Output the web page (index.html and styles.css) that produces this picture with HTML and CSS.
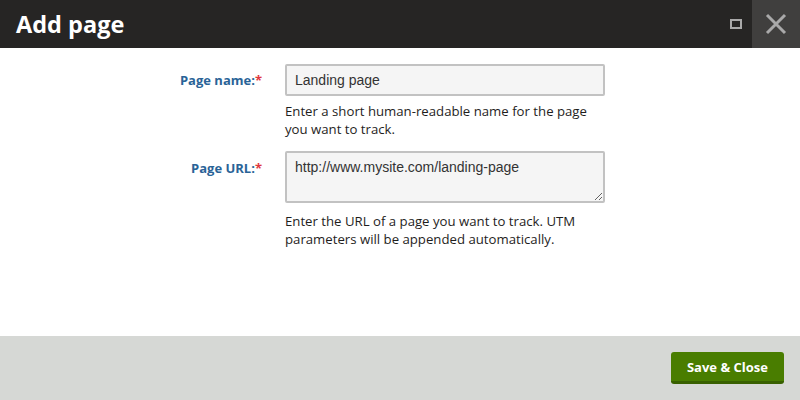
FILE: index.html
```html
<!DOCTYPE html>
<html>
<head>
<meta charset="utf-8">
<link rel="stylesheet" href="styles.css">
</head>
<body>
<div class="dialog">
  <header class="header">
    <h1 class="title">Add page</h1>
    <div class="header-actions">
      <button class="btn-max" aria-label="Maximize"><span class="max-icon"></span></button>
      <button class="btn-close" aria-label="Close">
        <svg width="22" height="22" viewBox="0 0 22 22"><path d="M2 2 L20 20 M20 2 L2 20" stroke="#a9a9a9" stroke-width="3" stroke-linecap="butt" fill="none"/></svg>
      </button>
    </div>
  </header>
  <main class="content">
    <div class="form-row">
      <label class="label">Page name:<span class="req">*</span></label>
      <div class="field">
        <input class="input" type="text" value="Landing page">
        <div class="help">Enter a short human-readable name for the page you want to track.</div>
      </div>
    </div>
    <div class="form-row">
      <label class="label label-top">Page URL:<span class="req">*</span></label>
      <div class="field">
        <textarea class="textarea">http://www.mysite.com/landing-page</textarea>
        <div class="help help-url">Enter the URL of a page you want to track. UTM parameters will be appended automatically.</div>
      </div>
    </div>
  </main>
  <footer class="footer">
    <button class="btn-save">Save &amp; Close</button>
  </footer>
</div>
</body>
</html>
```
FILE: styles.css
```css
* { box-sizing: border-box; }
html, body { margin: 0; padding: 0; }
body {
  width: 800px;
  height: 400px;
  overflow: hidden;
  background: #fff;
  font-family: "Open Sans", "Noto Sans", sans-serif;
}
.dialog {
  display: flex;
  flex-direction: column;
  height: 400px;
}
.header {
  height: 48px;
  background: #262524;
  display: flex;
  align-items: center;
  justify-content: space-between;
  flex-shrink: 0;
}
.title {
  margin: 0 0 0 16px;
  color: #fff;
  font-size: 23.5px;
  font-weight: 700;
  line-height: 48px;
}
.header-actions {
  display: flex;
  height: 48px;
}
.btn-max, .btn-close {
  border: none;
  padding: 0;
  margin: 0;
  height: 48px;
  display: flex;
  align-items: center;
  justify-content: center;
  cursor: pointer;
}
.btn-max {
  width: 32px;
  background: transparent;
}
.max-icon {
  display: block;
  width: 12px;
  height: 10px;
  border: 2px solid #a9a9a9;
}
.btn-close {
  width: 48px;
  background: #403f3e;
}
.content {
  flex: 1;
  padding-top: 16px;
}
.form-row {
  display: grid;
  grid-template-columns: 262px 320px;
  column-gap: 23px;
  margin-bottom: 13px;
}
.label {
  text-align: right;
  font-size: 13px;
  font-weight: 700;
  color: #2a6397;
  padding-top: 7px;
  line-height: 18px;
}
.label-top { padding-top: 8px; }
.req {
  color: #e0383e;
}
.field {
  display: flex;
  flex-direction: column;
}
.input, .textarea {
  display: block;
  width: 320px;
  border: 2px solid #c2c2c2;
  border-radius: 2px;
  background: #f5f5f5;
  font-family: "Liberation Sans", Arial, sans-serif;
  font-size: 14px;
  color: #333;
  padding: 0 8px;
  margin: 0;
  outline: none;
}
.input {
  height: 32px;
}
.textarea {
  height: 52px;
  padding-top: 5px;
  resize: vertical;
  line-height: 18px;
}
.help {
  margin-top: 6px;
  font-size: 13.2px;
  line-height: 18px;
  color: #1f1e1d;
  width: 320px;
}
.help-url { margin-top: 9px; }
.form-row + .form-row { margin-top: 1px; }
.footer {
  height: 64px;
  background: #d6d8d5;
  display: flex;
  align-items: center;
  justify-content: flex-end;
  padding-right: 16px;
  flex-shrink: 0;
}
.btn-save {
  height: 32px;
  padding: 0 16px;
  background: #497d00;
  border: none;
  border-bottom: 3px solid #386000;
  border-radius: 3px;
  color: #fff;
  font-family: "Open Sans", "Noto Sans", sans-serif;
  font-size: 13px;
  font-weight: 700;
  cursor: pointer;
}
```
